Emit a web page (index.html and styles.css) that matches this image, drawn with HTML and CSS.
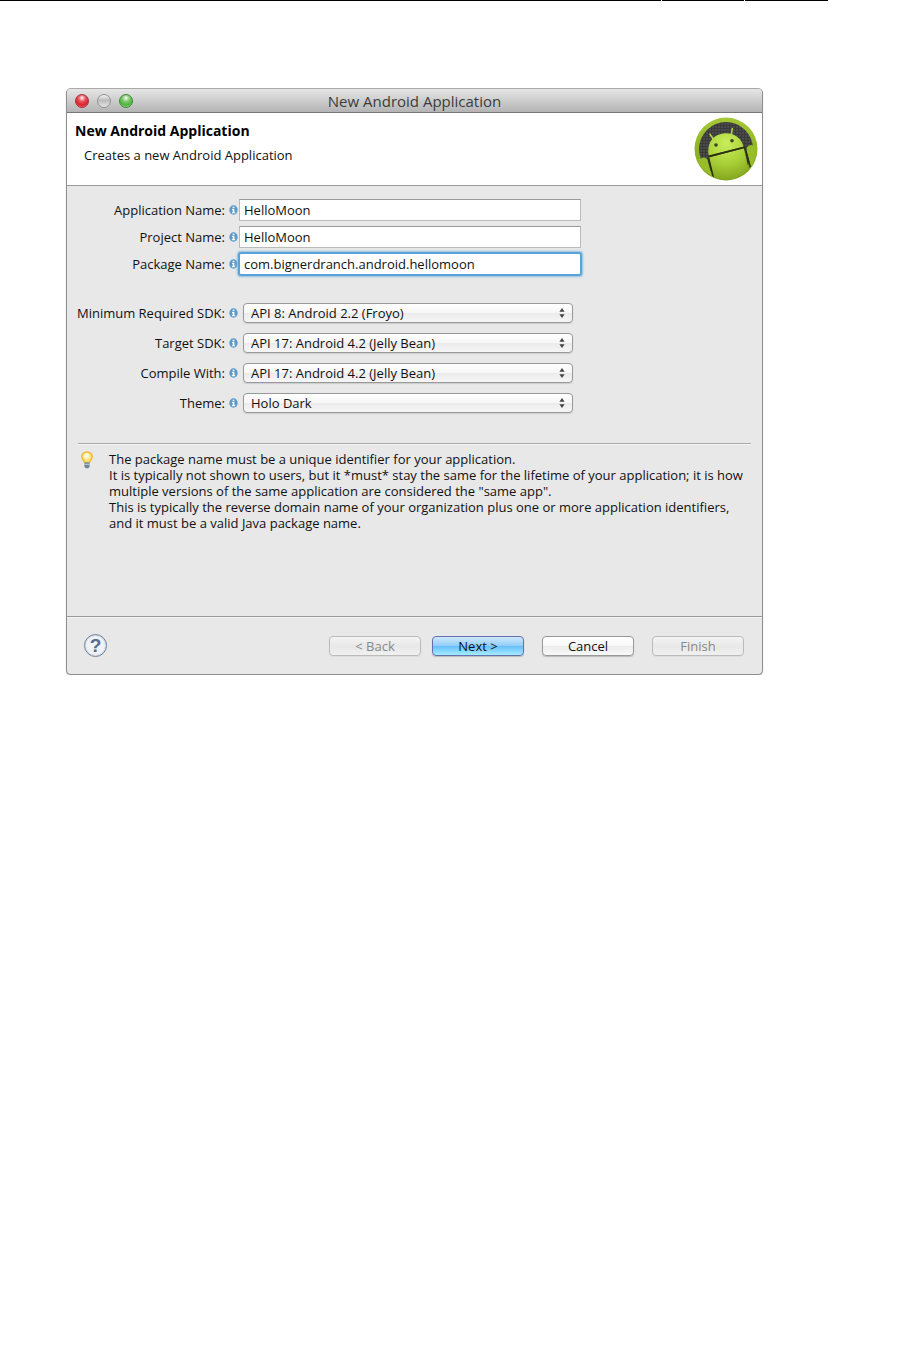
FILE: index.html
```html
<!DOCTYPE html>
<html lang="en">
<head>
    <meta charset="UTF-8">
    <meta name="viewport" content="width=device-width, initial-scale=1.0">
    <title>New Android Application</title>
    <link rel="stylesheet" href="styles.css">
</head>
<body>
    <svg width="0" height="0" class="defs" aria-hidden="true">
        <symbol id="info" viewBox="0 0 9 10">
            <ellipse cx="4.5" cy="5" rx="4.2" ry="4.7" fill="#5a9bcb"/>
            <path d="M3.6 1.8h1.8v1.4H3.6zM3 4.1h2.4v3.1h.8v1H2.9v-1h.8V5H3z" fill="#fff"/>
        </symbol>
        <symbol id="arrows" viewBox="0 0 6 10">
            <path d="M3 0L5.6 3.8H.4zM.4 6.2h5.2L3 10z" fill="#444"/>
        </symbol>
    </svg>

    <div class="rule">
        <span class="rule_long"></span>
        <span class="rule_short"></span>
        <span class="rule_short"></span>
    </div>

    <main class="dialog">
        <div class="titlebar">
            <div class="lights">
                <button class="light red" aria-label="Close"></button>
                <button class="light grey" aria-label="Minimize"></button>
                <button class="light green" aria-label="Zoom"></button>
            </div>
            <span class="title">New Android Application</span>
        </div>

        <header class="header">
            <div>
                <h1>New Android Application</h1>
                <p>Creates a new Android Application</p>
            </div>
            <svg class="logo" viewBox="0 0 64 64" aria-hidden="true">
                <defs>
                    <linearGradient id="ring" x1="0" y1="0" x2="0" y2="1">
                        <stop offset="0" stop-color="#a5c936"/>
                        <stop offset="1" stop-color="#7d9f18"/>
                    </linearGradient>
                    <radialGradient id="skin" gradientUnits="userSpaceOnUse" cx="32" cy="26" r="38">
                        <stop offset="0" stop-color="#c8ee5a"/>
                        <stop offset=".55" stop-color="#a9cf38"/>
                        <stop offset="1" stop-color="#82a51c"/>
                    </radialGradient>
                    <pattern id="mesh" width="3" height="3" patternUnits="userSpaceOnUse">
                        <rect width="3" height="3" fill="#3a3a3a"/>
                        <rect width="2" height="2" fill="#4b4b4b"/>
                    </pattern>
                    <clipPath id="disc"><circle cx="32" cy="32" r="30.5"/></clipPath>
                </defs>
                <circle cx="32" cy="32" r="31.5" fill="url(#ring)"/>
                <circle cx="32" cy="32" r="27" fill="url(#mesh)"/>
                <g clip-path="url(#disc)">
                    <path d="M14.6 38.5C12.5 25 20 17.5 29.5 16.5C39 15.500 47 20 49.500 29.800z" fill="url(#skin)"/>
                    <path d="M15 40.500L50 31.300L57 64H20z" fill="url(#skin)"/>
                    <path d="M0 42H6.500Q8 40 10.500 40.500Q13 41 13.600 43L19 64H0z" fill="#98bd2b"/>
                    <path d="M52.500 33.500Q52 29.500 55 28.500Q58 27.500 59.500 29L64 28V55L57.500 53z" fill="#98bd2b"/>
                    <path d="M14.600 39.600L50.500 30.200M14.600 41L19.500 61M51 31L57 52.500" fill="none" stroke="#293005" stroke-width="1.500"/>
                    <path d="M19.500 22.500L16 17.200M37.300 17.500L38.300 11.500" fill="none" stroke="#b5dc48" stroke-width="1.500" stroke-linecap="round"/>
                    <circle cx="22" cy="28" r="1.800" fill="#3c4420"/>
                    <circle cx="38" cy="23.800" r="1.800" fill="#3c4420"/>
                </g>
            </svg>
        </header>

        <form class="form">
            <div class="row">
                <label for="app">Application Name:</label>
                <svg class="info" aria-hidden="true"><use href="#info"/></svg>
                <input type="text" id="app" value="HelloMoon">
            </div>
            <div class="row">
                <label for="project">Project Name:</label>
                <svg class="info" aria-hidden="true"><use href="#info"/></svg>
                <input type="text" id="project" value="HelloMoon">
            </div>
            <div class="row">
                <label for="package">Package Name:</label>
                <svg class="info" aria-hidden="true"><use href="#info"/></svg>
                <input type="text" id="package" class="focused" value="com.bignerdranch.android.hellomoon">
            </div>

            <div class="sdk">
                <div class="row">
                    <label for="min">Minimum Required SDK:</label>
                    <svg class="info" aria-hidden="true"><use href="#info"/></svg>
                    <div class="select">
                        <select id="min"><option>API 8: Android 2.2 (Froyo)</option></select>
                        <svg class="arrows" aria-hidden="true"><use href="#arrows"/></svg>
                    </div>
                </div>
                <div class="row">
                    <label for="target">Target SDK:</label>
                    <svg class="info" aria-hidden="true"><use href="#info"/></svg>
                    <div class="select">
                        <select id="target"><option>API 17: Android 4.2 (Jelly Bean)</option></select>
                        <svg class="arrows" aria-hidden="true"><use href="#arrows"/></svg>
                    </div>
                </div>
                <div class="row">
                    <label for="compile">Compile With:</label>
                    <svg class="info" aria-hidden="true"><use href="#info"/></svg>
                    <div class="select">
                        <select id="compile"><option>API 17: Android 4.2 (Jelly Bean)</option></select>
                        <svg class="arrows" aria-hidden="true"><use href="#arrows"/></svg>
                    </div>
                </div>
                <div class="row">
                    <label for="theme">Theme:</label>
                    <svg class="info" aria-hidden="true"><use href="#info"/></svg>
                    <div class="select">
                        <select id="theme"><option>Holo Dark</option></select>
                        <svg class="arrows" aria-hidden="true"><use href="#arrows"/></svg>
                    </div>
                </div>
            </div>
        </form>

        <section class="tip">
            <svg class="bulb" viewBox="0 0 12 18" aria-hidden="true">
                <path d="M6 .8C2.900 .8 .8 3 .8 5.800C.8 8.300 3.200 9.300 3.600 11.500H8.400C8.800 9.300 11.200 8.300 11.200 5.800C11.200 3 9.100 .8 6 .8z" fill="#ffe680" stroke="#f3b32c" stroke-width="1.300"/>
                <ellipse cx="5.500" cy="4.800" rx="2.400" ry="2.600" fill="#fffbe0"/>
                <path d="M3.400 11.500H8.600V15.500L7.300 17.300H4.700L3.400 15.500z" fill="#6f8799"/>
                <path d="M3.400 13.300H8.600" stroke="#c4d2dc"/>
            </svg>
            <p>
                The package name must be a unique identifier for your application.<br>
                It is typically not shown to users, but it *must* stay the same for the lifetime of your application; it is how<br>
                multiple versions of the same application are considered the "same app".<br>
                This is typically the reverse domain name of your organization plus one or more application identifiers,<br>
                and it must be a valid Java package name.
            </p>
        </section>

        <footer class="footer">
            <button class="help" aria-label="Help">?</button>
            <div class="nav">
                <button class="btn" disabled>&lt; Back</button>
                <button class="btn next">Next &gt;</button>
            </div>
            <button class="btn">Cancel</button>
            <button class="btn" disabled>Finish</button>
        </footer>
    </main>
</body>
</html>
```
FILE: styles.css
```css
body {
    margin: 0;
    background: #fff;
    color: #111;
    font-family: "Open Sans", "Noto Sans", sans-serif;
    font-size: 13px;
    line-height: 16px;
}
h1, p {
    margin: 0;
}
.defs {
    position: absolute;
}
input, select, button {
    font: inherit;
    color: inherit;
    box-sizing: border-box;
    margin: 0;
}
.rule {
    display: flex;
    gap: 1px;
    height: 1px;
    margin-right: 89px;
}
.rule span {
    background: #000;
}
.rule_long {
    flex: 8;
}
.rule_short {
    flex: 1;
}
.dialog {
    margin: 87px 154px 0 66px;
    border: 1px solid #8e8e8e;
    border-top-color: #aaa;
    border-radius: 5px;
    background: #e8e8e8;
    box-shadow: 0 1px 1px #bbb;
    overflow: hidden;
}
.titlebar {
    display: grid;
    grid-template-columns: 1fr auto 1fr;
    align-items: center;
    height: 23px;
    padding: 0 8px;
    border-bottom: 1px solid #777;
    background: linear-gradient(#e6e6e6, #b4b4b4);
}
.title {
    font-size: 15px;
    color: #3c3c3c;
}
.lights {
    display: flex;
    gap: 8px;
}
.light {
    width: 14px;
    height: 14px;
    padding: 0;
    border: 1px solid;
    border-radius: 50%;
}
.red {
    border-color: #a3343a;
    background: radial-gradient(circle at 50% 25%, #fff 0, #ef5b62 30%, #dc1f2c 65%, #ff8d8d);
}
.grey {
    border-color: #8f8f8f;
    background: linear-gradient(#f2f2f2, #bbb 45%, #e6e6e6);
}
.green {
    border-color: #41863a;
    background: radial-gradient(circle at 50% 25%, #fff 0, #85ce75 30%, #4eb13f 65%, #b9f39f);
}
.header {
    display: flex;
    justify-content: space-between;
    height: 72px;
    padding: 0 4px 0 8px;
    border-bottom: 1px solid #999;
    background: #fff;
}
.header h1 {
    margin: 10px 0 8px;
    font-size: 14px;
    line-height: 16px;
    color: #000;
}
.header p {
    padding-left: 9px;
}
.logo {
    width: 64px;
    height: 64px;
    margin-top: 4px;
}
.form {
    display: flex;
    flex-direction: column;
    gap: 5px;
    padding: 13px 181px 30px 0;
}
.row {
    display: flex;
    align-items: center;
}
.row label {
    width: 158px;
    margin-right: 4px;
    text-align: right;
    white-space: nowrap;
}
.info {
    flex: none;
    width: 9px;
    height: 10px;
    margin-right: 1px;
}
.row input {
    flex: 1;
    min-width: 0;
    height: 22px;
    padding: 0 4px;
    border: 1px solid #bbb;
    border-top-color: #999;
    background: #fff;
    outline: none;
}
.row .focused {
    border-color: #5aa3d6;
    border-radius: 2px;
    box-shadow: 0 0 0 1px #5aa3d6, 0 0 2px 2px #8dbfe2;
}
.sdk {
    display: flex;
    flex-direction: column;
    gap: 10px;
    padding-top: 23px;
}
.select {
    position: relative;
    flex: 1;
    display: flex;
    margin: 0 8px 0 4px;
}
select {
    appearance: none;
    width: 100%;
    height: 20px;
    padding: 0 7px;
    border: 1px solid #999;
    border-radius: 4px;
    background: linear-gradient(#fff, #f6f6f6 50%, #ebebeb 50%, #f6f6f6);
    box-shadow: 0 1px 1px #ccc;
}
.arrows {
    position: absolute;
    top: 5px;
    right: 8px;
    width: 6px;
    height: 10px;
    pointer-events: none;
}
.tip {
    display: flex;
    gap: 16px;
    height: 165px;
    margin: 0 11px;
    padding: 7px 0 0 3px;
    border-top: 1px solid #aaa;
    box-shadow: inset 0 1px #f4f4f4;
    box-sizing: content-box;
}
.bulb {
    flex: none;
    width: 12px;
    height: 18px;
}
.tip p {
    white-space: nowrap;
}
.footer {
    display: flex;
    align-items: center;
    gap: 18px;
    height: 57px;
    padding: 0 18px 0 17px;
    border-top: 1px solid #999;
    box-shadow: inset 0 1px #f4f4f4;
}
.nav {
    display: flex;
    gap: 11px;
}
.help {
    width: 23px;
    height: 23px;
    margin-right: auto;
    padding: 0;
    border: 1px solid #6d7f9c;
    border-radius: 50%;
    background: #f0f2f5;
    box-shadow: inset 0 0 0 1px #d5dae3;
    color: #536c93;
    font: bold 19px/19px "Liberation Sans", sans-serif;
}
.btn {
    width: 92px;
    height: 20px;
    padding: 0;
    border: 1px solid #999;
    border-radius: 4px;
    background: linear-gradient(#fff, #f8f8f8 50%, #ececec 50%, #f8f8f8);
    box-shadow: 0 1px 1px #bbb;
    line-height: 18px;
}
.btn:disabled {
    border-color: #bbb;
    background: linear-gradient(#f4f4f4, #e8e8e8 50%, #f0f0f0);
    box-shadow: 0 1px 1px #ddd;
    color: #888;
}
.next {
    border-color: #6470b0;
    background: linear-gradient(#cfe8fb, #90ccf8 50%, #65bdf9 50%, #a5ecff);
}
```
